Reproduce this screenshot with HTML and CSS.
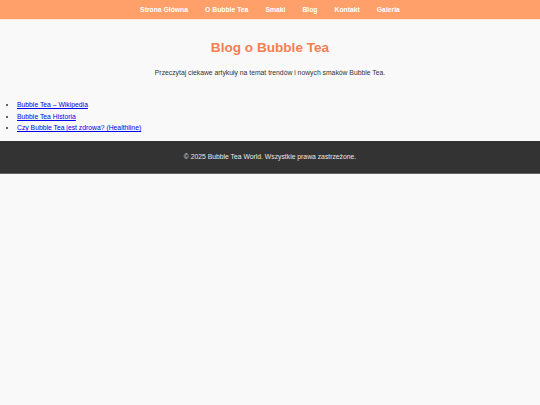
FILE: index.html
```html
<!DOCTYPE html>
<html lang="pl">
<head>
<meta charset="utf-8">
<title>Blog o Bubble Tea</title>
<link rel="stylesheet" href="styles.css">
</head>
<body>
<nav class="topnav">
  <a href="#">Strona Główna</a>
  <a href="#">O Bubble Tea</a>
  <a href="#">Smaki</a>
  <a href="#">Blog</a>
  <a href="#">Kontakt</a>
  <a href="#">Galeria</a>
</nav>
<section class="intro">
  <h1 class="title">Blog o Bubble Tea</h1>
  <p class="lead">Przeczytaj ciekawe artykuły na temat trendów i nowych smaków Bubble Tea.</p>
</section>
<ul class="links">
  <li><a href="#">Bubble Tea – Wikipedia</a></li>
  <li><a href="#">Bubble Tea Historia</a></li>
  <li><a href="#">Czy Bubble Tea jest zdrowa? (Healthline)</a></li>
</ul>
<footer class="footer">© 2025 Bubble Tea World. Wszystkie prawa zastrzeżone.</footer>
</body>
</html>
```
FILE: styles.css
```css
html, body {
  margin: 0;
  padding: 0;
}
body {
  background: #f9f9f9;
  font-family: "Liberation Sans", Arial, sans-serif;
  font-size: 6.8px;
  color: #333;
}
.topnav {
  height: 19px;
  background: #ffa06a;
  display: flex;
  justify-content: center;
  align-items: center;
  gap: 17px;
  border-bottom: 1px solid #ffe6d8;
}
.topnav a {
  color: #fff;
  text-decoration: none;
  font-weight: bold;
}
.intro {
  text-align: center;
  padding-top: 20px;
}
.title {
  margin: 0;
  font-size: 13.6px;
  line-height: 16px;
  color: #f77e52;
}
.lead {
  margin: 13px 0 0;
  line-height: 8px;
}
.links {
  margin: 22px 0 0;
  padding-left: 17px;
  line-height: 11.5px;
}
.links a {
  color: #0000ee;
}
.footer {
  margin-top: 7px;
  background: #333;
  color: #e8e8e8;
  text-align: center;
  height: 32px;
  line-height: 32px;
  border-bottom: 1px solid #666;
}
```
